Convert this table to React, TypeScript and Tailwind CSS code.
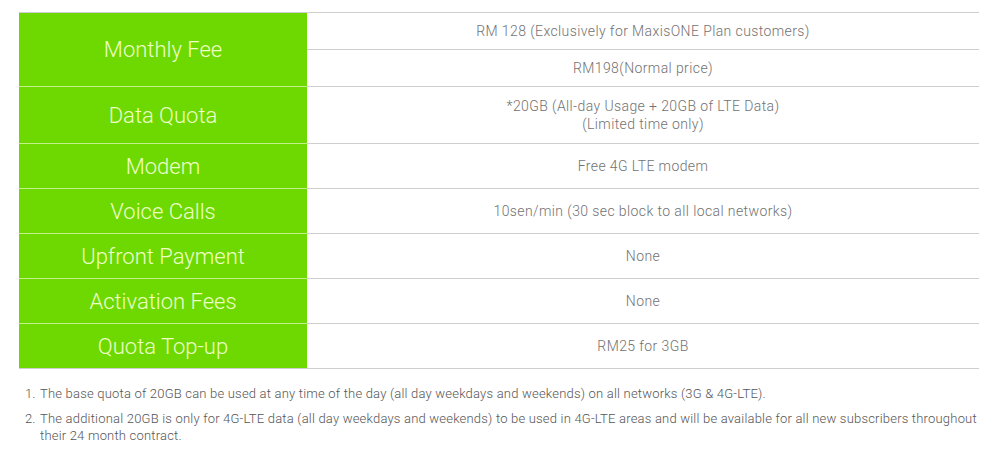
import React from "react";

const rows: { label: string; values: React.ReactNode[]; h: string }[] = [
  { label: "Data Quota", values: [<>*20GB (All-day Usage + 20GB of LTE Data)<br />(Limited time only)</>], h: "h-[57px]" },
  { label: "Modem", values: ["Free 4G LTE modem"], h: "h-[45px]" },
  { label: "Voice Calls", values: ["10sen/min (30 sec block to all local networks)"], h: "h-[45px]" },
  { label: "Upfront Payment", values: ["None"], h: "h-[45px]" },
  { label: "Activation Fees", values: ["None"], h: "h-[45px]" },
  { label: "Quota Top-up", values: ["RM25 for 3GB"], h: "h-[45px]" },
];

const labelBase =
  "w-[288px] shrink-0 bg-[#6dd900] flex items-center justify-center text-[22px] font-light text-[#eeffc8]";
const valueBase =
  "flex items-center justify-center text-center leading-[18px] text-[14px] tracking-[0.4px] font-light text-[#727272]";

export default function App() {
  return (
    <div className="w-[994px] h-[469px] bg-white pt-[12px] pl-[19px] font-['Roboto',sans-serif]">
      <div className="w-[960px] flex flex-col border-t border-[#cfcfcf]">
        <div className="flex h-[74px] border-b border-[#cfcfcf]">
          <div className={`${labelBase} border-b border-[#c6f08a] -mb-px`}>Monthly Fee</div>
          <div className="flex-1 flex flex-col">
            <div className={`${valueBase} h-[37px] border-b border-[#cfcfcf]`}>
              RM 128 (Exclusively for MaxisONE Plan customers)
            </div>
            <div className={`${valueBase} flex-1`}>RM198(Normal price)</div>
          </div>
        </div>
        {rows.map((r, i) => (
          <div key={r.label} className={`flex ${r.h} border-b border-[#cfcfcf]`}>
            <div
              className={
                i === rows.length - 1 ? labelBase : `${labelBase} border-b border-[#c6f08a] -mb-px`
              }
            >
              {r.label}
            </div>
            <div className={`${valueBase} flex-1`}>{r.values[0]}</div>
          </div>
        ))}
      </div>
      <ol className="list-decimal pl-[20px] mt-[16px] w-[962px] text-[13px] tracking-[0.2px] leading-[17px] text-[#555] font-light">
        <li className="mb-[8px] pl-[1px]">
          The base quota of 20GB can be used at any time of the day (all day weekdays and weekends) on all networks (3G &amp; 4G-LTE).
        </li>
        <li className="pl-[1px]">
          The additional 20GB is only for 4G-LTE data (all day weekdays and weekends) to be used in 4G-LTE areas and will be available for all new subscribers throughout their 24 month contract.
        </li>
      </ol>
    </div>
  );
}
